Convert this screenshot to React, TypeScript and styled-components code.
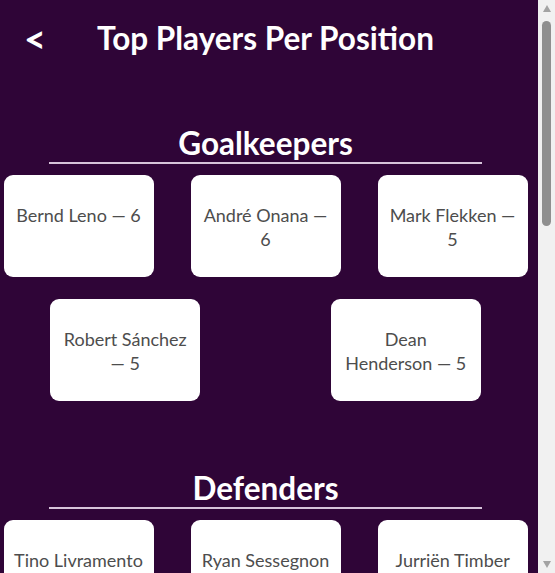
import React from 'react'
import styled, { createGlobalStyle } from 'styled-components'

interface Player {
  name: string
  score: number
}

interface PositionGroup {
  title: string
  players: Player[]
}

const positions: PositionGroup[] = [
  {
    title: 'Goalkeepers',
    players: [
      { name: 'Bernd Leno', score: 6 },
      { name: 'André Onana', score: 6 },
      { name: 'Mark Flekken', score: 5 },
      { name: 'Robert Sánchez', score: 5 },
      { name: 'Dean Henderson', score: 5 },
    ],
  },
  {
    title: 'Defenders',
    players: [
      { name: 'Tino Livramento', score: 6 },
      { name: 'Ryan Sessegnon', score: 6 },
      { name: 'Jurriën Timber', score: 6 },
      { name: 'William Saliba', score: 5 },
      { name: 'Virgil van Dijk', score: 5 },
    ],
  },
  {
    title: 'Midfielders',
    players: [
      { name: 'Bukayo Saka', score: 9 },
      { name: 'Cole Palmer', score: 8 },
      { name: 'Bryan Mbeumo', score: 8 },
      { name: 'Mohamed Salah', score: 7 },
      { name: 'Jarrod Bowen', score: 7 },
    ],
  },
  {
    title: 'Forwards',
    players: [
      { name: 'Erling Haaland', score: 9 },
      { name: 'Chris Wood', score: 8 },
      { name: 'Yoane Wissa', score: 7 },
      { name: 'Jean-Philippe Mateta', score: 6 },
      { name: 'Alexander Isak', score: 6 },
    ],
  },
]

const GlobalStyle = createGlobalStyle`
  html {
    background: #2f0537;
  }
  body {
    margin: 0;
    background: #2f0537;
    overflow-x: hidden;
    font-family: Lato, 'Open Sans', sans-serif;
  }
`

const Page = styled.main`
  padding: 0 24px 40px 0;
`

const Header = styled.header`
  display: grid;
  grid-template-columns: 1fr auto 1fr;
  align-items: center;
  padding: 19px 0 10px;
`

const BackButton = styled.button`
  justify-self: start;
  margin-left: 24px;
  padding: 0;
  border: none;
  background: none;
  color: #fff;
  font: 700 38px/38px Lato, 'Open Sans', sans-serif;
  cursor: pointer;
`

const Title = styled.h1`
  margin: 0;
  color: #fff;
  font: 700 31.5px/38px Lato, 'Open Sans', sans-serif;
  white-space: nowrap;
`

const Section = styled.section`
  margin-top: 57px;
`

const SectionTitle = styled.h2`
  margin: 0 49px;
  border-bottom: 2px solid #d6c4da;
  color: #fff;
  text-align: center;
  font: 700 31.5px/38px Lato, 'Open Sans', sans-serif;
`

const CardGrid = styled.div`
  display: flex;
  flex-flow: row wrap;
  justify-content: space-around;
  margin: 0 -15px;
`

const Card = styled.div`
  box-sizing: border-box;
  width: 150px;
  margin: 11px;
  padding: 28px 10px 26px;
  background: #fff;
  border-radius: 9px;
  color: #4d4d4d;
  text-align: center;
  font-size: 18px;
  line-height: 24px;
`

/* window scrollbar, pinned to the right edge */
const ScrollTrack = styled.div`
  position: fixed;
  top: 0;
  right: 0;
  bottom: 0;
  width: 17px;
  display: flex;
  flex-direction: column;
  align-items: center;
  padding: 5px 0;
  box-sizing: border-box;
  background: #f1f1f1;
`

const ScrollArrow = styled.div<{ $down?: boolean }>`
  width: 0;
  height: 0;
  border-left: 4.5px solid transparent;
  border-right: 4.5px solid transparent;
  ${({ $down }) =>
    $down
      ? 'margin-top: auto; border-top: 7px solid #a3a3a3;'
      : 'border-bottom: 7px solid #a3a3a3;'}
`

const ScrollThumb = styled.div`
  margin-top: 9px;
  width: 9px;
  height: 205px;
  border-radius: 5px;
  background: #8f8f8f;
`

export default function App() {
  return (
    <>
      <GlobalStyle />
      <Page>
        <Header>
          <BackButton>&lt;</BackButton>
          <Title>Top Players Per Position</Title>
        </Header>
        {positions.map((group) => (
          <Section key={group.title}>
            <SectionTitle>{group.title}</SectionTitle>
            <CardGrid>
              {group.players.map((player) => (
                <Card key={player.name}>
                  {player.name} — {player.score}
                </Card>
              ))}
            </CardGrid>
          </Section>
        ))}
      </Page>
      <ScrollTrack>
        <ScrollArrow />
        <ScrollThumb />
        <ScrollArrow $down />
      </ScrollTrack>
    </>
  )
}
